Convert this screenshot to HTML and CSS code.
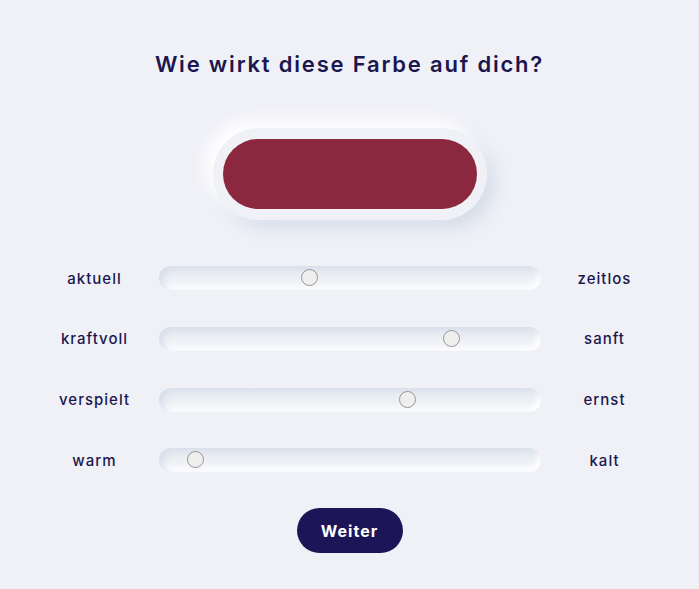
FILE: index.html
```html
<!DOCTYPE html>
<html lang="de">
<head>
<meta charset="utf-8">
<title>Farbe</title>
<link rel="stylesheet" href="styles.css">
</head>
<body>
<main class="page">
  <h1 class="title">Wie wirkt diese Farbe auf dich?</h1>
  <div class="swatch-frame">
    <div class="swatch"></div>
  </div>
  <div class="scales">
    <span class="label">aktuell</span>
    <div class="track"><span class="thumb" style="left: calc(0.39 * (100% - 17px));"></span></div>
    <span class="label">zeitlos</span>

    <span class="label">kraftvoll</span>
    <div class="track"><span class="thumb" style="left: calc(0.78 * (100% - 17px));"></span></div>
    <span class="label">sanft</span>

    <span class="label">verspielt</span>
    <div class="track"><span class="thumb" style="left: calc(0.659 * (100% - 17px));"></span></div>
    <span class="label">ernst</span>

    <span class="label">warm</span>
    <div class="track"><span class="thumb" style="left: calc(0.078 * (100% - 17px));"></span></div>
    <span class="label">kalt</span>
  </div>
  <div class="actions">
    <button class="next" type="button">Weiter</button>
  </div>
</main>
</body>
</html>
```
FILE: styles.css
```css
* { box-sizing: border-box; }
html, body {
  margin: 0;
  padding: 0;
  background: #f0f1f7;
}
body {
  font-family: Inter, "Open Sans", "Liberation Sans", sans-serif;
  color: #1b174f;
  width: 699px;
  height: 589px;
  overflow: hidden;
}
.page {
  display: flex;
  flex-direction: column;
  align-items: center;
  padding-top: 48px;
}
.title {
  margin: 0;
  font-size: 22px;
  line-height: 32px;
  font-weight: 600;
  letter-spacing: 1.8px;
  color: #1b174f;
}
.swatch-frame {
  margin-top: 48px;
  padding: 11px 10px;
  border-radius: 47px;
  background: #eff1f7;
  box-shadow: -8px -8px 16px #ffffff, 8px 8px 18px #d3dce8;
}
.swatch {
  width: 254px;
  height: 70px;
  border-radius: 35px;
  background: #8c2740;
}
.scales {
  margin-top: 46px;
  display: grid;
  grid-template-columns: 110px 382px 110px;
  column-gap: 9px;
  row-gap: 36.8px;
  align-items: center;
}
.label {
  text-align: center;
  font-size: 15px;
  font-weight: 500;
  letter-spacing: 1px;
  color: #1b174f;
}
.track {
  position: relative;
  height: 24px;
  border-radius: 12px;
  background: linear-gradient(180deg, #e3e8f0 0%, #edf0f5 55%, #f7f8fb 100%);
  box-shadow: inset 4px 3px 6px #d8dfea, inset -3px -3px 6px #ffffff;
}
.thumb {
  position: absolute;
  top: 3px;
  width: 17px;
  height: 17px;
  border-radius: 50%;
  background: #efefef;
  border: 1.5px solid #959595;
}
.actions {
  margin-top: 36px;
}
.next {
  width: 106px;
  height: 45px;
  border: none;
  border-radius: 23px;
  background: #1c1658;
  color: #ffffff;
  font-family: Inter, "Open Sans", "Liberation Sans", sans-serif;
  font-size: 16px;
  font-weight: 700;
  letter-spacing: 1px;
  cursor: pointer;
}
```
